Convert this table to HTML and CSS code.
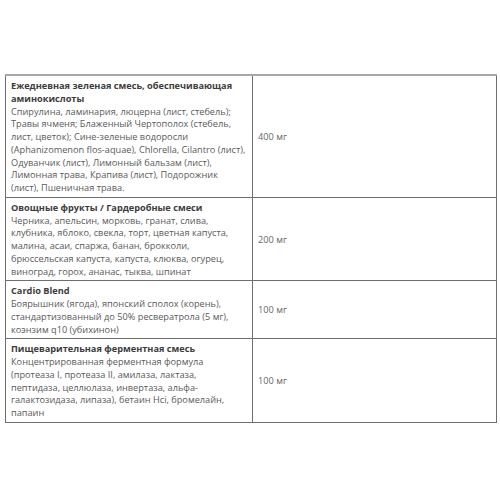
FILE: index.html
```html
<!DOCTYPE html>
<html lang="ru">
<head>
<meta charset="utf-8">
<link rel="stylesheet" href="styles.css">
</head>
<body>
<table class="blend">
  <tr>
    <td class="ing">
      <div class="name">Ежедневная зеленая смесь, обеспечивающая<br>аминокислоты</div>
      <div class="desc">Спирулина, ламинария, люцерна (лист, стебель);<br>Травы ячменя; Блаженный Чертополох (стебель,<br>лист, цветок); Сине-зеленые водоросли<br>(Aphanizomenon flos-aquae), Chlorella, Cilantro (лист),<br>Одуванчик (лист), Лимонный бальзам (лист),<br>Лимонная трава, Крапива (лист), Подорожник<br>(лист), Пшеничная трава.</div>
    </td>
    <td class="amt">400 мг</td>
  </tr>
  <tr>
    <td class="ing">
      <div class="name">Овощные фрукты / Гардеробные смеси</div>
      <div class="desc">Черника, апельсин, морковь, гранат, слива,<br>клубника, яблоко, свекла, торт, цветная капуста,<br>малина, асаи, спаржа, банан, брокколи,<br>брюссельская капуста, капуста, клюква, огурец,<br>виноград, горох, ананас, тыква, шпинат</div>
    </td>
    <td class="amt">200 мг</td>
  </tr>
  <tr>
    <td class="ing">
      <div class="name">Cardio Blend</div>
      <div class="desc">Боярышник (ягода), японский сполох (корень),<br>стандартизованный до 50% ресвератрола (5 мг),<br>коэнзим q10 (убихинон)</div>
    </td>
    <td class="amt">100 мг</td>
  </tr>
  <tr>
    <td class="ing">
      <div class="name">Пищеварительная ферментная смесь</div>
      <div class="desc">Концентрированная ферментная формула<br>(протеаза I, протеаза II, амилаза, лактаза,<br>пептидаза, целлюлаза, инвертаза, альфа-<br>галактозидаза, липаза), бетаин Hci, бромелайн,<br>папаин</div>
    </td>
    <td class="amt">100 мг</td>
  </tr>
</table>
</body>
</html>
```
FILE: styles.css
```css
html, body {
  margin: 0;
  background: #fff;
}
body {
  font-family: "Open Sans", "Noto Sans", sans-serif;
  font-size: 9.2px;
  line-height: 12.75px;
  color: #5a5a5a;
}
.blend {
  border-collapse: collapse;
  margin: 74px 0 0 5px;
  width: 492px;
  table-layout: fixed;
}
.blend td {
  border: 1px solid #6e6e6e;
  padding: 4px 5px 2px 5px;
  vertical-align: middle;
  white-space: nowrap;
}
.blend tr:first-child td {
  border-top: 2px solid #a8a8a8;
}
.ing {
  width: 236px;
}
.name {
  font-weight: 700;
  color: #3c3c3c;
}
.amt {
  color: #666;
}
```
